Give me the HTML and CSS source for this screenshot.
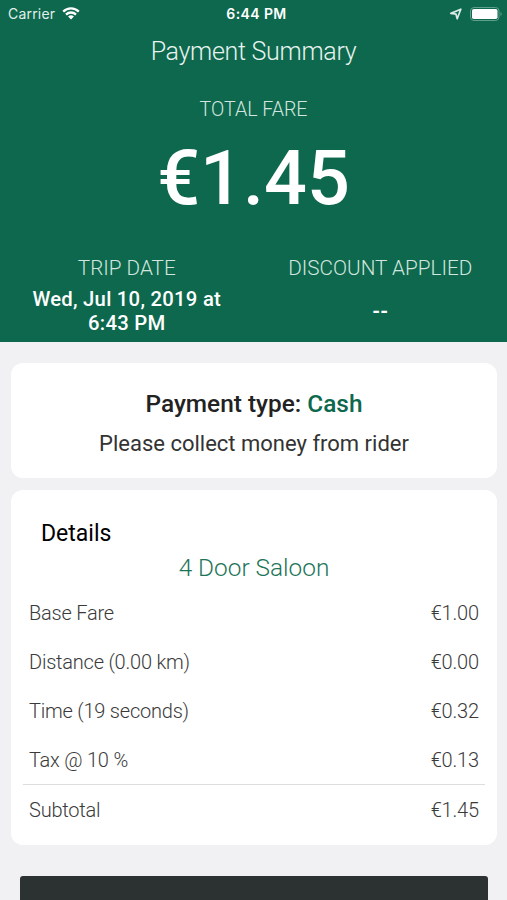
FILE: index.html
```
<!DOCTYPE html>
<html lang="en">
<head>
<meta charset="utf-8">
<title>Payment Summary</title>
<link rel="stylesheet" href="styles.css">
</head>
<body>
<header class="hero">
  <div class="status">
    <div class="carrier"><span>Carrier</span>
      <svg viewBox="0 0 18 13" width="18" height="13"><path d="M1.200 4.600a11 11 0 0 1 15.600 0M4 7.600a7 7 0 0 1 10 0" fill="none" stroke="#fff" stroke-width="2.300"/><path d="M6.100 9.600a4.200 4.200 0 0 1 5.800 0L9 12.500z" fill="#fff"/></svg>
    </div>
    <div class="clock">6:44 PM</div>
    <div class="power">
      <svg viewBox="0 0 12 12" width="12" height="12"><path d="M.8 5.400 10.800 1.200 7.200 10.800 6 6.200z" fill="none" stroke="#d9ebe4" stroke-width="1.700" stroke-linejoin="round"/></svg>
      <svg viewBox="0 0 33 14" width="33" height="14"><rect x=".5" y=".5" width="28.500" height="13" rx="3.500" fill="none" stroke="#5f9f8b"/><rect x="2" y="2" width="25.500" height="10" rx="1.800" fill="#fff"/><path d="M30.500 5a2.300 2.300 0 0 1 0 4z" fill="#5f9f8b"/></svg>
    </div>
  </div>
  <h1 class="title">Payment Summary</h1>
  <div class="label total-label">TOTAL FARE</div>
  <div class="total">€1.45</div>
  <div class="facts">
    <div class="fact"><div class="label">TRIP DATE</div><div class="value">Wed, Jul 10, 2019 at<br>6:43 PM</div></div>
    <div class="fact"><div class="label">DISCOUNT APPLIED</div><div class="value dash">--</div></div>
  </div>
</header>
<main>
  <section class="card pay">
    <div class="type">Payment type: <span class="cash">Cash</span></div>
    <div class="note">Please collect money from rider</div>
  </section>
  <section class="card details">
    <h2>Details</h2>
    <div class="car">4 Door Saloon</div>
    <div class="row"><span>Base Fare</span><span class="price">€1.00</span></div>
    <div class="row"><span>Distance (0.00 km)</span><span class="price">€0.00</span></div>
    <div class="row"><span>Time (19 seconds)</span><span class="price">€0.32</span></div>
    <div class="row"><span>Tax @ 10 %</span><span class="price">€0.13</span></div>
    <div class="row subtotal"><span>Subtotal</span><span class="price">€1.45</span></div>
  </section>
  <div class="button"></div>
</main>
</body>
</html>
```
FILE: styles.css
```
* { box-sizing: border-box; }
body { margin: 0; height: 900px; overflow: hidden; background: #f1f1f3; font-family: Roboto, sans-serif; color: #222; }
.hero { height: 342px; background: #0d684d; color: #fff; text-align: center; }
.status { display: grid; grid-template-columns: 1fr auto 1fr; align-items: center; height: 27px; padding: 0 4px 0 8px; font: 14px/20px Inter, sans-serif; }
.carrier { display: flex; align-items: center; gap: 7px; color: #e2f0eb; letter-spacing: .2px; }
.clock { font-weight: 600; letter-spacing: .4px; padding-left: 2px; }
.power { display: flex; align-items: center; justify-content: flex-end; gap: 8px; }
.title { margin: 10px 0 0; font-size: 25px; line-height: 30px; font-weight: 300; letter-spacing: -.3px; color: #e8f3ef; }
.label { font-size: 20.7px; line-height: 24px; font-weight: 300; color: #d2e6df; }
.total-label { margin-top: 31px; font-size: 19.6px; }
.total { margin-top: 11px; font-size: 75.5px; line-height: 90px; font-weight: 500; }
.facts { display: grid; grid-template-columns: 1fr 1fr; margin-top: 33px; }
.value { margin-top: 7px; font-size: 20.3px; line-height: 24px; font-weight: 500; letter-spacing: .25px; }
.dash { margin-top: 19px; font-size: 20px; font-weight: 700; letter-spacing: 0; }
main { padding: 21px 10px 0 11px; }
.card { background: #fff; border-radius: 12px; }
.pay { height: 115px; padding-top: 26px; text-align: center; }
.type { font-size: 24.4px; line-height: 30px; font-weight: 500; }
.cash { color: #0d684d; }
.note { margin-top: 11px; font-size: 22px; line-height: 28px; color: #333; }
.details { height: 355px; margin-top: 12px; padding: 30px 12px 0; }
h2 { margin: 0 0 0 18px; font-size: 23px; line-height: 28px; font-weight: 400; color: #000; }
.car { margin-top: 5px; text-align: center; font-size: 24.4px; line-height: 30px; font-weight: 300; color: #1d7559; }
.row { display: flex; justify-content: space-between; align-items: center; height: 49px; padding: 0 6px; font-size: 20px; letter-spacing: -.22px; font-weight: 300; color: #3a3a3a; }
.price { letter-spacing: -.2px; margin-right: .2px; }
.car + .row { margin-top: 5px; }
.subtotal { height: 51px; border-top: 1px solid #ddd; }
.button { height: 40px; margin: 31px 9px 0; background: #2c3131; border-radius: 3px; }
```
